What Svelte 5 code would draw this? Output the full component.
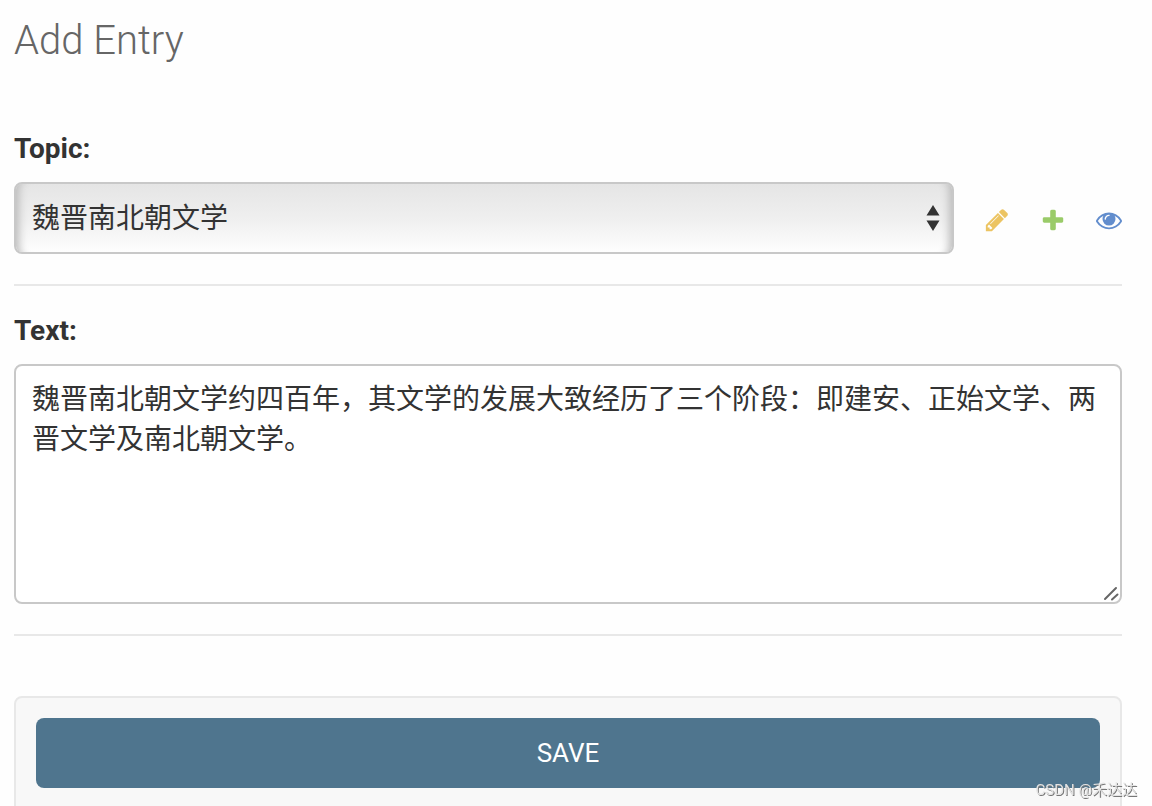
<script>
  let topics = ["魏晋南北朝文学"];
  let topic = topics[0];
  let text =
    "魏晋南北朝文学约四百年，其文学的发展大致经历了三个阶段：即建安、正始文学、两晋文学及南北朝文学。";

  // related object links next to the drop-down
  const actions = [
    {
      name: "change",
      label: "Change selected topic",
      path: "M491 1536l91-91-235-235-91 91v107h128v128h107zm523-928q0-22-22-22-10 0-17 7l-542 542q-7 7-7 17 0 22 22 22 10 0 17-7l542-542q7-7 7-17zm-54-192l416 416-832 832h-416v-416zm683 96q0 53-37 90l-166 166-416-416 166-165q36-38 90-38 53 0 91 38l235 234q37 39 37 91z"
    },
    {
      name: "add",
      label: "Add another topic",
      path: "M1600 796v192q0 40-28 68t-68 28h-416v416q0 40-28 68t-68 28h-192q-40 0-68-28t-28-68v-416h-416q-40 0-68-28t-28-68v-192q0-40 28-68t68-28h416v-416q0-40 28-68t68-28h192q40 0 68 28t28 68v416h416q40 0 68 28t28 68z"
    },
    {
      name: "view",
      label: "View selected topic",
      path: "M1664 960q-152-236-381-353 61 104 61 225 0 185-131.5 316.5t-316.5 131.5-316.5-131.5-131.5-316.5q0-121 61-225-229 117-381 353 133 205 333.5 326.5t434.5 121.5 434.5-121.5 333.5-326.5zm-720-384q0-20-14-34t-34-14q-125 0-214.5 89.5t-89.5 214.5q0 20 14 34t34 14 34-14 14-34q0-86 61-147t147-61q20 0 34-14t14-34zm848 384q0 34-20 69-140 230-376.5 368.5t-499.5 138.5-499.5-139-376.5-368q-20-35-20-69t20-69q140-229 376.5-368t499.5-139 499.5 139 376.5 368q20 35 20 69z"
    }
  ];
</script>

<style>
  :global(body) {
    margin: 0;
    background: #fefefe;
    color: #333;
    font-family: Roboto, "Noto Sans CJK SC", sans-serif;
    font-size: 28px;
    overflow: hidden;
  }

  .content {
    padding: 17px 30px 0 14px;
  }

  h1 {
    margin: 0 0 40px;
    font-size: 40px;
    line-height: 48px;
    font-weight: 300;
    color: #666;
  }

  .form-row {
    padding: 28px 0 30px;
    border-bottom: 2px solid #e8e8e8;
  }

  .form-row + .form-row {
    padding-top: 29px;
  }

  .form-row label {
    display: block;
    margin-bottom: 17px;
    line-height: 32px;
    font-weight: 700;
  }

  .related {
    display: flex;
    align-items: center;
    gap: 30px;
  }

  .select-box {
    position: relative;
    flex: 1;
  }

  select,
  textarea {
    display: block;
    box-sizing: border-box;
    width: 100%;
    margin: 0;
    border: 2px solid #c8c8c8;
    border-radius: 8px;
    color: #333;
    font: inherit;
    line-height: 40px;
  }

  select {
    appearance: none;
    height: 72px;
    padding: 2px 48px 0 16px;
    background: linear-gradient(#e5e5e5, #f0f0f0 55%, #fefefe);
    box-shadow: inset 12px 0 8px -9px #bbb, inset -12px 0 8px -9px #bbb;
  }

  .arrows {
    position: absolute;
    right: 14px;
    top: 22px;
    width: 14px;
    height: 28px;
    fill: #333;
    pointer-events: none;
  }

  .actions {
    display: flex;
    gap: 30px;
  }

  .actions a {
    display: block;
    height: 26px;
    padding-top: 4px;
  }

  .actions svg {
    display: block;
    width: 26px;
    height: 26px;
  }

  .change {
    fill: #ecc462;
  }

  .add {
    fill: #9acb69;
  }

  .view {
    fill: #628dcd;
  }

  .text-box {
    position: relative;
  }

  textarea {
    height: 240px;
    padding: 14px 16px;
    background: #fff;
    resize: none;
  }

  .grip {
    position: absolute;
    right: 3px;
    bottom: 3px;
    width: 16px;
    height: 16px;
    stroke: #666;
    stroke-width: 2;
    stroke-linecap: round;
    pointer-events: none;
  }

  .submit-row {
    margin-top: 60px;
    padding: 20px 20px 40px;
    border: 2px solid #e8e8e8;
    border-radius: 8px;
    background: #f8f8f8;
  }

  .submit-row button {
    display: block;
    width: 100%;
    height: 70px;
    padding: 0;
    border: 0;
    border-radius: 8px;
    background: #4f758e;
    color: #fff;
    font: inherit;
    font-size: 26px;
    text-transform: uppercase;
  }

  .watermark {
    position: fixed;
    right: 15px;
    bottom: 6px;
    font-size: 15px;
    line-height: 20px;
    color: #e4e4e4;
    text-shadow: 1px 1px 0 #777;
  }
</style>

<form class="content" on:submit|preventDefault>
  <h1>Add Entry</h1>

  <div class="form-row">
    <label for="id_topic">Topic:</label>
    <div class="related">
      <div class="select-box">
        <select id="id_topic" bind:value={topic}>
          {#each topics as item}
            <option value={item}>{item}</option>
          {/each}
        </select>
        <svg class="arrows" viewBox="0 0 14 28" aria-hidden="true">
          <path d="M7 1l6.500 10.500H.5zM7 27L.5 16.500h13z" />
        </svg>
      </div>
      <div class="actions">
        {#each actions as action}
          <a href="#{action.name}" aria-label={action.label}>
            <svg class={action.name} viewBox="0 0 1792 1792"><path d={action.path} /></svg>
          </a>
        {/each}
      </div>
    </div>
  </div>

  <div class="form-row">
    <label for="id_text">Text:</label>
    <div class="text-box">
      <textarea id="id_text" bind:value={text}></textarea>
      <svg class="grip" viewBox="0 0 16 16" aria-hidden="true">
        <path d="M2 14L13 3M9 14.500L14.500 9.500" />
      </svg>
    </div>
  </div>

  <div class="submit-row">
    <button type="submit">Save</button>
  </div>
</form>

<div class="watermark">CSDN @禾达达</div>
